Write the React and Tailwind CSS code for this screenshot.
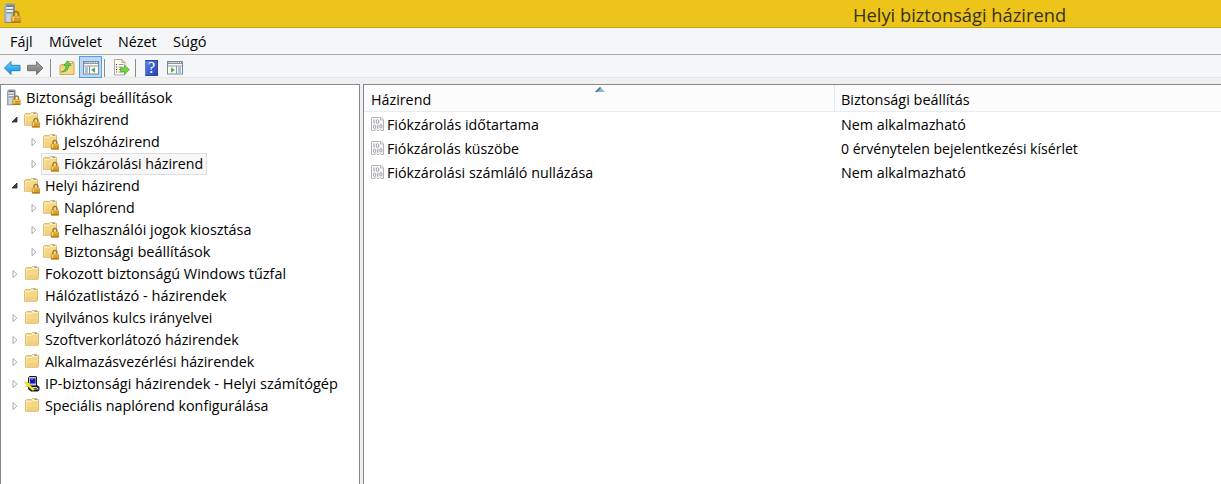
import { useLayoutEffect, useRef } from "react";

// Text condensed horizontally so that it takes up exactly `width` pixels.
function Label({ width, className = "pb-0.5", children }) {
  const outer = useRef(null);
  const inner = useRef(null);
  useLayoutEffect(() => {
    const natural = inner.current.offsetWidth;
    outer.current.style.width = `${width}px`;
    inner.current.style.transform = `scaleX(${width / natural})`;
  }, [width, children]);
  return (
    <span ref={outer} className={`inline-block shrink-0 whitespace-pre ${className}`}>
      <span ref={inner} className="inline-block origin-left">{children}</span>
    </span>
  );
}

function Lock({ x, y }) {
  return (
    <g transform={`translate(${x} ${y})`}>
      <path d="M2.100 5V3.200a2 2.200 0 0 1 4 0V5" fill="none" stroke="#9c7a22" strokeWidth="1.400" />
      <rect x="0" y="4.600" width="8.200" height="5.400" rx=".4" fill="#cf9420" />
      <path d="M.4 5.500h7.400" stroke="#eec65a" strokeWidth="1" />
      <path d="M.4 7.600h7.400" stroke="#e0ab36" strokeWidth=".9" />
      <path d="M.4 9.500h7.400" stroke="#a06f10" strokeWidth=".9" />
      <path d="M1.800 5.500v3" stroke="#f8de8c" strokeWidth="1" />
    </g>
  );
}

function ServerIcon({ className }) {
  return (
    <svg viewBox="0 0 16 17" className={className}>
      <path d="M1 2l1.500-1.500H9L8 2z" fill="#8e99a3" />
      <path d="M1 1.800h7v14H1z" fill="#b4c0ca" />
      <path d="M8 1.800L9.500.6V14L8 15.800z" fill="#7b8893" />
      <path d="M2.800 2.500h5" stroke="#4e5962" strokeWidth="1" />
      <path d="M2.800 4h5M2.800 6.500h5" stroke="#f2f5f7" strokeWidth="1.400" />
      <path d="M2.800 5.200h5M2.800 7.800h5" stroke="#75828d" strokeWidth=".8" />
      <path d="M1.500 2.500v13" stroke="#96a4b0" />
      <path d="M3 9h3v6H3z" fill="#cbd5dd" />
      <path d="M1 15.800h7" stroke="#76838e" strokeWidth=".7" />
      <Lock x={6.400} y={6} />
    </svg>
  );
}

function FolderShape() {
  return (
    <>
      <path d="M.5 2.500l1-1h5l1-1H12l.5 1h1v11l-.6.8H.5z" fill="#f5d78a" stroke="#d9b464" strokeWidth=".9" />
      <path d="M7.500 1.500H12" stroke="#fffbe8" />
      <rect x="9.500" y="1" width="2.200" height="1" fill="#4f9cce" />
      <path d="M1 3.500h5.500l1-1H13" fill="none" stroke="#fff2c4" strokeWidth=".9" />
      <path d="M1 9h12v3.500H1z" fill="#f0cb76" opacity=".6" />
      <path d="M1.400 4v8.500" stroke="#fbe8b4" strokeWidth=".8" />
    </>
  );
}

function FolderIcon({ inset = true }) {
  return (
    <svg viewBox="0 0 17 16" className="h-4 w-[17px]">
      <g transform={inset ? "translate(1 0)" : "translate(0 0)"}><FolderShape /></g>
    </svg>
  );
}

function LockedFolderIcon() {
  return (
    <svg viewBox="0 0 17 16" className="h-4 w-[17px]">
      <FolderShape />
      <Lock x={7.800} y={5.400} />
    </svg>
  );
}

function IpSecIcon() {
  return (
    <svg viewBox="0 0 17 16" className="h-4 w-[17px]">
      <path d="M4 2l1.500-2H12l1 1v8l2.500 2v3L14 15.500H7L4 13z" fill="#15151c" />
      <path d="M5 1h7v8.500H5z" fill="#c3c5cd" />
      <path d="M6 2.500h5.500v5H6z" fill="#1418b4" />
      <path d="M7 3.500h2" stroke="#5573ec" />
      <path d="M6.500 11h6l2 1.500v1H8z" fill="#d0d1d8" />
      <path d="M9 12.500h4" stroke="#555" />
      <path d="M.5 6.500l2-.5 3 1.500.5 2 4.500 3.500-1 1.500-1.500-.3L4.500 11l-3-.8 1.500-1z" fill="#f4ef1b" stroke="#b5aa16" strokeWidth=".4" />
    </svg>
  );
}

function Twisty({ state }) {
  return (
    <svg viewBox="0 0 8 10" className="h-2.5 w-2 shrink-0">
      {state === "open" && <path d="M7 2v5H2z" fill="#404040" stroke="#262626" strokeWidth=".8" />}
      {state === "closed" && <path d="M3 1.500v7.200L6.900 5.100z" fill="#fff" stroke="#a0a0a0" strokeWidth=".9" />}
    </svg>
  );
}

const TREE = [
  { text: "Fiókházirend", width: 84, level: 1, state: "open", icon: "locked" },
  { text: "Jelszóházirend", width: 96, level: 2, state: "closed", icon: "locked" },
  { text: "Fiókzárolási házirend", width: 139, level: 2, state: "closed", icon: "locked", selected: true },
  { text: "Helyi házirend", width: 95, level: 1, state: "open", icon: "locked" },
  { text: "Naplórend", width: 71, level: 2, state: "closed", icon: "locked" },
  { text: "Felhasználói jogok kiosztása", width: 187, level: 2, state: "closed", icon: "locked" },
  { text: "Biztonsági beállítások", width: 146, level: 2, state: "closed", icon: "locked" },
  { text: "Fokozott biztonságú Windows tűzfal", width: 241, level: 1, state: "closed", icon: "folder" },
  { text: "Hálózatlistázó - házirendek", width: 182, level: 1, state: "none", icon: "folder" },
  { text: "Nyilvános kulcs irányelvei", width: 167, level: 1, state: "closed", icon: "folder" },
  { text: "Szoftverkorlátozó házirendek", width: 194, level: 1, state: "closed", icon: "folder" },
  { text: "Alkalmazásvezérlési házirendek", width: 209, level: 1, state: "closed", icon: "folder" },
  { text: "IP-biztonsági házirendek - Helyi számítógép", width: 293, level: 1, state: "closed", icon: "ipsec" },
  { text: "Speciális naplórend konfigurálása", width: 223, level: 1, state: "closed", icon: "folder" },
];

const ICONS = { locked: LockedFolderIcon, folder: FolderIcon, ipsec: IpSecIcon };

function TreeRow({ item }) {
  const Icon = ICONS[item.icon];
  return (
    <div className={`flex h-[22px] items-center ${item.level === 2 ? "pl-[28px]" : "pl-[9px]"}`}>
      <Twisty state={item.state} />
      <div
        className={`ml-1 flex h-[22px] items-center border pl-px pr-[3px] ${
          item.selected ? "border-[#dedede] bg-[#f7f7f7]" : "border-transparent"
        }`}
      >
        <Icon inset={item.state !== "none"} />
        <Label width={item.width} className="ml-1 pb-0.5">{item.text}</Label>
      </div>
    </div>
  );
}

function PolicyIcon() {
  return (
    <svg viewBox="0 0 14 14" className="h-3.5 w-3.5">
      <path d="M.5.5H10L12.500 3v10.500H10l-1-1-1 1H6l-1-1-1.500 1h-3z" fill="#fbfbfc" stroke="#b4b4ba" />
      <path d="M9.500.5V3h3" fill="none" stroke="#b4b4ba" />
      <path d="M3 2.500v4" stroke="#9d9aa8" />
      <ellipse cx="6.500" cy="4.500" rx="1.300" ry="1.900" fill="none" stroke="#9d9aa8" />
      <ellipse cx="3.600" cy="9.800" rx="1.200" ry="1.800" fill="none" stroke="#9d9aa8" />
      <path d="M6.800 7.500V12" stroke="#9d9aa8" />
      <ellipse cx="9.900" cy="9.300" rx="1.200" ry="1.800" fill="none" stroke="#9d9aa8" />
    </svg>
  );
}

const POLICIES = [
  { name: "Fiókzárolás időtartama", nameWidth: 152, value: "Nem alkalmazható", valueWidth: 125 },
  { name: "Fiókzárolás küszöbe", nameWidth: 132, value: "0 érvénytelen bejelentkezési kísérlet", valueWidth: 237 },
  { name: "Fiókzárolási számláló nullázása", nameWidth: 206, value: "Nem alkalmazható", valueWidth: 125 },
];

function ArrowIcon({ forward }) {
  const id = forward ? "fwd" : "back";
  return (
    <svg viewBox="0 0 17 14" className="h-3.5 w-[17px]">
      <defs>
        <linearGradient id={id} x1="0" y1="0" x2="0" y2="1">
          <stop offset="0" stopColor={forward ? "#b7b7b7" : "#8edbfa"} />
          <stop offset=".5" stopColor={forward ? "#8e8e8e" : "#35b0f0"} />
          <stop offset="1" stopColor={forward ? "#7c7c7c" : "#168fdc"} />
        </linearGradient>
      </defs>
      <path
        d={forward ? "M16 7L9.500.5v3.800h-9v5.400h9v3.800z" : "M.5 7L7 .5v3.800h9v5.400H7v3.800z"}
        fill={`url(#${id})`}
        stroke={forward ? "#6c6c6c" : "#2678b4"}
        strokeWidth=".9"
        strokeLinejoin="round"
      />
    </svg>
  );
}

function UpFolderIcon() {
  return (
    <svg viewBox="0 0 16 16" className="h-4 w-4">
      <path d="M1 5.500l1-1h4l1-1h6.500v-1H15v12H1z" fill="#f3d385" stroke="#cfa956" />
      <path d="M2 8.500h12V14H2z" fill="#f7d98d" />
      <path d="M9 1.500h5v1.500" fill="none" stroke="#d8b565" />
      <path d="M2.500 12C5 11 7 9.500 7 5.500H4.700L8.500.8 12 5.500H9.600C9.600 9.500 7 12.300 2.500 12z" fill="#62d337" stroke="#3d9a2c" strokeWidth=".7" />
    </svg>
  );
}

function PaneIcon({ flip }) {
  return (
    <svg viewBox="0 0 16 14" className="h-3.5 w-4">
      <rect x=".5" y=".5" width="15" height="12.500" fill="#fcfcfc" stroke="#7f8994" />
      <rect x="1" y="1" width="14" height="2" fill="#8b98a5" />
      <path d="M1.500 1.500h9" stroke="#c5cdd5" />
      <path d="M11 1.500h1M13 1.500h1" stroke="#fff" />
      <path d="M1 5h14" stroke="#8d97a1" />
      <path d={flip ? "M9.500 5v8" : "M6.500 5v8"} stroke="#8d97a1" />
      <path d={flip ? "M11 7h3M11 9h3M11 11h3" : "M2 7h3M2 9h3M2 11h3"} stroke="#4a85c6" />
      <path d={flip ? "M4.200 6.300v5.400L7.500 9z" : "M11.800 6.300v5.400L8.500 9z"} fill="#35a836" />
    </svg>
  );
}

function ExportIcon() {
  return (
    <svg viewBox="0 0 17 17" className="h-[17px] w-[17px]">
      <path d="M1.500.5H9l3 3v12.500H1.500z" fill="#fffdf2" stroke="#b0aa96" />
      <path d="M9 .5v3h3" fill="none" stroke="#b0aa96" />
      <path d="M3 5.500h1M3 8h1M3 10.500h1M3 13h1" stroke="#333" />
      <path d="M5.500 5.500h5M5.500 8h4M5.500 10.500h3M5.500 13h5" stroke="#a19d94" />
      <path d="M7.500 8.800h4V6.200l4.800 4.500-4.800 4.500v-2.600h-4z" fill="#72d840" stroke="#4fa834" strokeWidth=".8" />
    </svg>
  );
}

function HelpIcon() {
  return (
    <span className="flex h-4 w-[13px] items-center justify-center border border-[#2a429c] border-l-[#5d7be0] bg-linear-to-br from-[#5b7ce2] to-[#2544b5] font-['Liberation_Serif',serif] text-[16px] leading-none text-white">
      ?
    </span>
  );
}

function Separator() {
  return <span className="h-[18px] w-px shrink-0 bg-[#8b8b8b]" />;
}

export default function App() {
  return (
    <div className="flex h-[484px] w-[1221px] flex-col overflow-hidden bg-[#f0f0f0] font-['Open_Sans','Noto_Sans',sans-serif] text-[15px] leading-[22px] text-black">
      <header className="flex h-7 shrink-0 items-center border-b border-[#c9a415] bg-[#edc51a] pl-[3px]">
        <ServerIcon className="h-[21px] w-5" />
        <Label width={213} className="ml-[830px] pt-0.5 text-[19px] leading-[26px] text-[#383110]">Helyi biztonsági házirend</Label>
      </header>

      <nav className="flex h-[27px] shrink-0 items-center border-b border-[#a9abae] bg-[#f5f6f7] pl-2.5 pt-0.5">
        <Label width={23}>Fájl</Label>
        <Label width={53} className="ml-4 pb-0.5">Művelet</Label>
        <Label width={39} className="ml-4 pb-0.5">Nézet</Label>
        <Label width={34} className="ml-4 pb-0.5">Súgó</Label>
      </nav>

      <div className="flex h-[23px] shrink-0 items-center border-b border-[#e4e6e8] bg-[#f5f6f7] pl-1 pt-px">
        <span className="flex pt-0.5"><ArrowIcon /></span>
        <span className="ml-1.5 flex pt-0.5"><ArrowIcon forward /></span>
        <span className="ml-1.5 flex pt-0.5"><Separator /></span>
        <span className="ml-2 flex pt-0.5"><UpFolderIcon /></span>
        <span className="ml-1 flex h-[22px] w-[23px] shrink-0 items-center justify-center border border-[#569de5] bg-[#b9d8f8] pt-0.5">
          <PaneIcon />
        </span>
        <span className="ml-0.5 flex pt-0.5"><Separator /></span>
        <span className="ml-2 flex pt-0.5"><ExportIcon /></span>
        <span className="ml-[5px] flex pt-0.5"><Separator /></span>
        <span className="ml-[9px] flex pt-0.5"><HelpIcon /></span>
        <span className="ml-[9px] flex pt-[3px]"><PaneIcon flip /></span>
      </div>

      <main className="mt-1.5 flex min-h-0 flex-1 gap-[3px]">
        <section className="w-[360px] shrink-0 border-x border-t border-[#828790] bg-white pt-0.5">
          <div className="flex h-[22px] items-center pl-[5px]">
            <span className="flex pb-0.5"><ServerIcon className="h-[17px] w-4" /></span>
            <Label width={146} className="ml-1 pb-0.5">Biztonsági beállítások</Label>
          </div>
          {TREE.map((item, i) => (
            <TreeRow key={i} item={item} />
          ))}
        </section>

        <section className="min-w-0 flex-1 border-l border-t border-[#828790] bg-white">
          <div className="relative flex h-[27px] items-center border-b border-[#e3edf7] bg-[#fcfcfc]">
            <div className="flex h-[26px] w-[471px] shrink-0 items-center border-r border-[#dfeaf7] pl-[7px] pt-1">
              <Label width={60}>Házirend</Label>
            </div>
            <div className="flex items-center pl-1.5 pt-1">
              <Label width={129}>Biztonsági beállítás</Label>
            </div>
            <svg viewBox="0 0 10 5" className="absolute left-[231px] top-0.5 h-[5px] w-2.5">
              <path d="M5 0l5 5H0z" fill="#83b9d2" />
              <path d="M0 5l5-5 1 1-4 4z" fill="#3e6c88" />
            </svg>
          </div>
          <div className="pt-px">
            {POLICIES.map((p) => (
              <div key={p.name} className="flex h-6 items-center">
                <div className="flex w-[471px] shrink-0 items-center pl-[7px]">
                  <span className="flex pb-0.5"><PolicyIcon /></span>
                  <Label width={p.nameWidth} className="ml-0.5 pb-0.5">{p.name}</Label>
                </div>
                <Label width={p.valueWidth} className="ml-1.5 pb-0.5">{p.value}</Label>
              </div>
            ))}
          </div>
        </section>
      </main>
    </div>
  );
}
